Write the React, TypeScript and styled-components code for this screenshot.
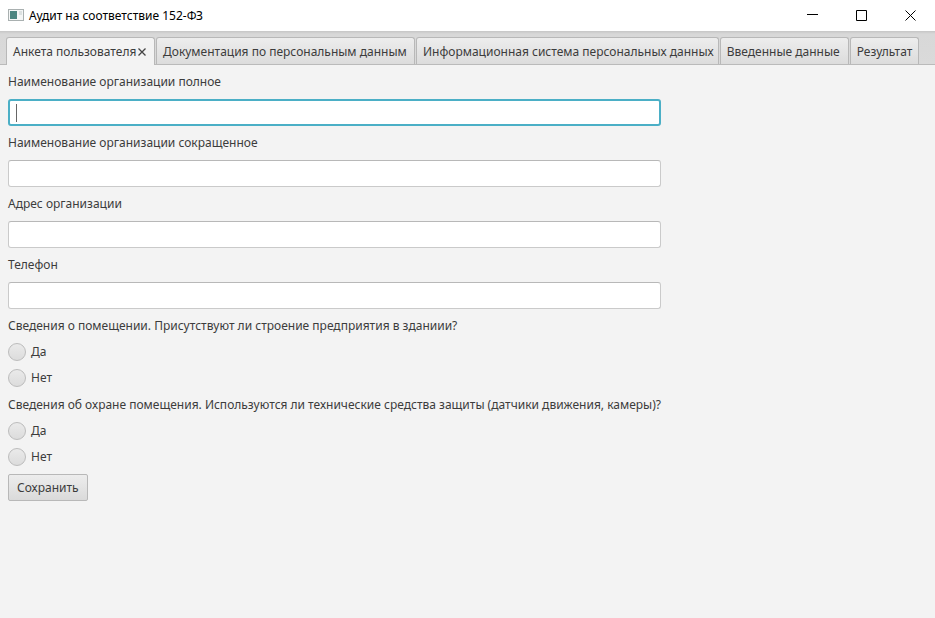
import React, { useState } from 'react';
import styled, { createGlobalStyle } from 'styled-components';

const Global = createGlobalStyle`
  * { box-sizing: border-box; }
  html, body { margin: 0; background: #f3f3f3; }
  body, button, input { font: 12px/18px "Noto Sans", "Open Sans", sans-serif; color: #3c3c3c; }
`;
const Window = styled.main`min-height: 100vh; background: #f3f3f3;`;
const TitleBar = styled.header`
  display: flex; align-items: center; height: 31px; padding-left: 8px; background: #fff; color: #000;
`;
const Title = styled.h1`
  margin: 0 auto 0 5px; font: 12px/18px "Noto Sans", sans-serif;
`;
const WindowButton = styled.button`
  display: grid; place-items: center; width: 49px; height: 31px; border: 0; padding: 0; background: none;
`;
const TabBar = styled.div`
  display: flex; align-items: flex-end; gap: 1px; height: 34px; padding: 0 6px;
  background: linear-gradient(#c6c6c6, #d8d8d8 3px, #dadada); border-bottom: 1px solid #bababa;
`;
const Tab = styled.button<{ $active: boolean; $width: number }>`
  flex: 0 0 auto; min-width: ${p => p.$width}px; display: flex; align-items: center; gap: 2px;
  height: ${p => (p.$active ? 28 : 27)}px; margin-bottom: ${p => (p.$active ? -1 : 0)}px;
  padding: ${p => (p.$active ? 0 : 1)}px 4px 0 6px;
  border: 1px solid #b8b8b8; border-bottom: 0; border-radius: 3px 3px 0 0; white-space: nowrap;
  background: ${p => (p.$active ? '#f3f3f3' : 'linear-gradient(#ededed, #dcdcdc)')};
`;
const Form = styled.form`
  display: flex; flex-direction: column; align-items: flex-start; width: fit-content; padding: 8px;
`;
const Field = styled.label`
  display: flex; flex-direction: column; gap: 8px; width: 100%; margin-bottom: 8px;
`;
const TextInput = styled.input`
  height: 27px; padding: 0 8px; border: 1px solid #cacaca; border-top-color: #b8b8b8; border-radius: 3px;
  background: #fff; outline: 0;
  &:focus { padding: 0 7px; border: 2px solid #4bafc6; }
  &:focus:placeholder-shown {
    caret-color: transparent;
    background: linear-gradient(#666, #666) 6px center / 1px 18px no-repeat #fff;
  }
`;
const Group = styled.fieldset`
  display: flex; flex-direction: column; gap: 8px; border: 0; margin: 0 0 8px; padding: 0;
  & + & { margin-top: 1px; }
`;
const Legend = styled.legend`padding: 0; margin-bottom: 8px; white-space: nowrap;`;
const Option = styled.label`display: flex; align-items: center; gap: 5px;`;
const Radio = styled.input`
  appearance: none; width: 18px; height: 18px; margin: 0; border: 1px solid #bcbcbc; border-radius: 50%;
  background: linear-gradient(#eaeaea, #dcdcdc);
  &:checked { background: radial-gradient(circle, #333 4px, #e2e2e2 5px); }
`;
const Save = styled.button`
  height: 27px; padding: 0 8px; border: 1px solid #b8b8b8; border-radius: 2px; background: linear-gradient(#ededed, #dadada);
`;
const tabs = [
  { name: 'Анкета пользователя', width: 149 },
  { name: 'Документация по персональным данным', width: 259 },
  { name: 'Информационная система персональных данных', width: 302 },
  { name: 'Введенные данные', width: 129 },
  { name: 'Результат', width: 69 },
];
const fields = ['Наименование организации полное', 'Наименование организации сокращенное', 'Адрес организации', 'Телефон'];
const questions = [
  'Сведения о помещении. Присутствуют ли строение предприятия в зданиии?',
  'Сведения об охране помещения. Используются ли технические средства защиты (датчики движения, камеры)?',
];
export default function App() {
  const [active, setActive] = useState(0);
  return (
    <Window>
      <Global />
      <TitleBar>
        <svg width="16" height="16">
          <rect x=".5" y="1.5" width="15" height="11" fill="#f4f6f6" stroke="#a9b0b0" />
          <rect x="2" y="3" width="7" height="8" fill="#4b8580" />
          <path d="M11 4h3M11 6h3" stroke="#c4cccc" />
        </svg>
        <Title>Аудит на соответствие 152-ФЗ</Title>
        <WindowButton aria-label="Свернуть"><svg width="11" height="11" stroke="#000"><path d="M0 4.5h11" /></svg></WindowButton>
        <WindowButton aria-label="Развернуть"><svg width="11" height="11" stroke="#000" fill="none"><path d="M.5.5h10v10H.5z" /></svg></WindowButton>
        <WindowButton aria-label="Закрыть"><svg width="11" height="11" stroke="#000"><path d="M.5.5l10 10M10.5.5l-10 10" /></svg></WindowButton>
      </TitleBar>
      <TabBar role="tablist">
        {tabs.map((t, i) => (
          <Tab key={t.name} role="tab" aria-selected={i === active} $active={i === active} $width={t.width} onClick={() => setActive(i)}>
            {t.name}
            {i === active && <svg width="8" height="8" stroke="#444" strokeWidth="1.3"><path d="M.5.5l7 7M7.5.5l-7 7" /></svg>}
          </Tab>
        ))}
      </TabBar>
      <Form onSubmit={e => e.preventDefault()}>
        {fields.map((f, i) => <Field key={f}>{f}<TextInput placeholder=" " autoFocus={i === 0} /></Field>)}
        {questions.map((q, i) => (
          <Group key={q}>
            <Legend>{q}</Legend>
            {['Да', 'Нет'].map(o => <Option key={o}><Radio type="radio" name={`q${i}`} />{o}</Option>)}
          </Group>
        ))}
        <Save type="submit">Сохранить</Save>
      </Form>
    </Window>
  );
}
